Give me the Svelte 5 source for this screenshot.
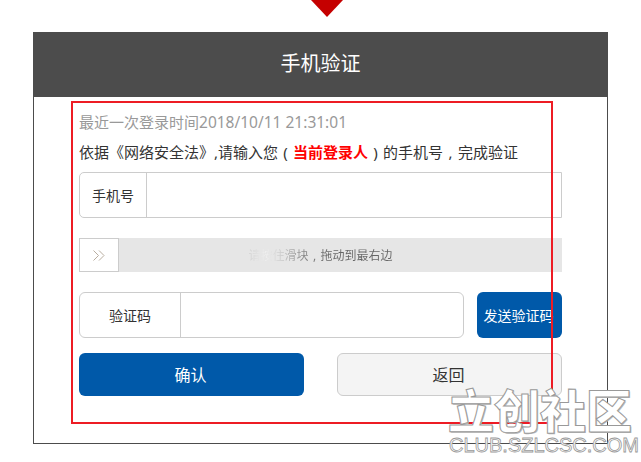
<script lang="ts">
  let phone = $state('');
  let code = $state('');
</script>

<div class="page">
  <div class="caret-row">
    <svg class="caret" width="32" height="17" viewBox="0 0 32 17"><path d="M0 0H32L16 17Z" fill="#c50000" /></svg>
  </div>

  <section class="panel">
    <h1 class="panel-title">手机验证</h1>

    <div class="form">
      <p class="last-login">最近一次登录时间<span class="date">2018/10/11 21:31:01</span></p>
      <p class="notice">
        依据《网络安全法》,请输入您<span class="punct">(</span><strong>当前登录人</strong><span class="punct">)</span>的手机号<span class="punct">,</span>完成验证
      </p>

      <label class="field phone-field">
        <span class="field-label phone-label">手机号</span>
        <input class="field-input" bind:value={phone} />
      </label>

      <div class="slider">
        <span class="slider-handle">
          <svg width="12" height="11" viewBox="0 0 12 11" fill="none" stroke="#b8ad9f" stroke-width="1">
            <path d="M0.5 0.5L5.5 5.5L0.5 10.5" />
            <path d="M6 0.5L11 5.5L6 10.5" />
          </svg>
        </span>
        <span class="slider-text">请按住滑块<span class="punct">,</span>拖动到最右边</span>
      </div>

      <div class="code-row">
        <label class="field code-field">
          <span class="field-label code-label">验证码</span>
          <input class="field-input" bind:value={code} />
        </label>
        <button class="btn-send">发送验证码</button>
      </div>

      <div class="actions">
        <button class="btn btn-confirm">确认</button>
        <button class="btn btn-back">返回</button>
      </div>
    </div>

    <div class="highlight"></div>
  </section>

  <div class="watermark">
    <span class="wm-cn">立创社区</span>
    <span class="wm-en">CLUB.SZLCSC.COM</span>
  </div>
</div>

<style>
  :global(body) {
    margin: 0;
    background: #fff;
  }

  .page {
    position: relative;
    width: 641px;
    height: 462px;
    overflow: hidden;
    font-family: 'Noto Sans', 'Noto Sans CJK SC', sans-serif;
    color: #333;
  }

  .caret-row {
    height: 32px;
    padding-left: 311px;
  }

  .caret {
    display: block;
  }

  .panel {
    position: relative;
    box-sizing: border-box;
    width: 575px;
    height: 412px;
    margin-left: 33px;
    border: 1px solid #4c4c4c;
    border-top: none;
  }

  .panel-title {
    height: 65px;
    margin: 0 -1px;
    background: #4c4c4c;
    color: #fff;
    font-size: 20px;
    font-weight: 400;
    line-height: 64px;
    text-align: center;
  }

  .form {
    display: flex;
    flex-direction: column;
    width: 483px;
    margin-left: 45px;
  }

  .last-login {
    margin: 13px 0 0;
    height: 24px;
    font-size: 15px;
    line-height: 24px;
    color: #999;
    white-space: nowrap;
  }

  .date {
    font-size: 15.5px;
  }

  .notice {
    margin: 6px 0 0;
    height: 24px;
    font-size: 15px;
    line-height: 24px;
    white-space: nowrap;
  }

  .notice strong {
    color: #f00;
    font-weight: 700;
  }

  .punct {
    display: inline-block;
    width: 1em;
    text-align: center;
  }

  .field {
    display: flex;
    box-sizing: border-box;
    height: 46px;
    border: 1px solid #ccc;
  }

  .field-label {
    display: flex;
    align-items: center;
    justify-content: center;
    box-sizing: border-box;
    border-right: 1px solid #ccc;
    font-size: 14px;
  }

  .field-input {
    flex: 1;
    min-width: 0;
    border: none;
    outline: none;
    background: transparent;
  }

  .phone-field {
    margin-top: 8px;
    border-radius: 5px 0 0 5px;
  }

  .phone-label {
    width: 67px;
  }

  .slider {
    display: flex;
    height: 34px;
    margin-top: 20px;
    background: #e6e6e6;
  }

  .slider-handle {
    display: flex;
    align-items: center;
    justify-content: center;
    box-sizing: border-box;
    width: 40px;
    height: 34px;
    background: #fff;
    border: 1px solid #ccc;
  }

  .slider-text {
    flex: 1;
    margin-left: -40px;
    font-size: 12px;
    line-height: 35px;
    text-align: center;
    background: linear-gradient(90deg, #cfcfcf 169px, #f0f0f0 187px, #c4c4c4 205px, #888 225px, #666 250px);
    -webkit-background-clip: text;
    background-clip: text;
    color: transparent;
  }

  .code-row {
    display: flex;
    justify-content: space-between;
    margin-top: 20px;
  }

  .code-field {
    width: 385px;
    border-radius: 6px;
  }

  .code-label {
    width: 101px;
  }

  .btn-send {
    box-sizing: border-box;
    width: 85px;
    height: 46px;
    padding: 0 2px 0 0;
    background: #0059a9;
    border: none;
    border-radius: 6px;
    color: #fff;
    font: inherit;
    font-size: 14px;
    white-space: nowrap;
  }

  .actions {
    display: flex;
    justify-content: space-between;
    margin-top: 15px;
  }

  .btn {
    box-sizing: border-box;
    width: 225px;
    height: 43px;
    padding: 0 2px 2px 0;
    border-radius: 6px;
    font: inherit;
    font-size: 16px;
  }

  .btn-confirm {
    background: #0059a9;
    border: none;
    color: #fff;
  }

  .btn-back {
    background: #f4f4f4;
    border: 1px solid #ccc;
    color: #333;
  }

  .highlight {
    position: absolute;
    left: 37px;
    top: 69px;
    box-sizing: border-box;
    width: 482px;
    height: 323px;
    border: 2px solid #ed1c24;
    pointer-events: none;
  }

  .watermark {
    position: absolute;
    left: 448px;
    top: 385px;
    display: flex;
    flex-direction: column;
    width: 184px;
    pointer-events: none;
  }

  .wm-cn {
    height: 50px;
    font-size: 46px;
    font-weight: 900;
    line-height: 50px;
    white-space: nowrap;
    color: #fff;
    -webkit-text-stroke: 1px #999;
    text-shadow: 1px 1px 0 #bbb;
  }

  .wm-en {
    padding-left: 1px;
    font-family: 'Liberation Sans', sans-serif;
    font-size: 20px;
    line-height: 20px;
    white-space: nowrap;
    color: #fff;
    -webkit-text-stroke: 0.8px #999;
  }
</style>
